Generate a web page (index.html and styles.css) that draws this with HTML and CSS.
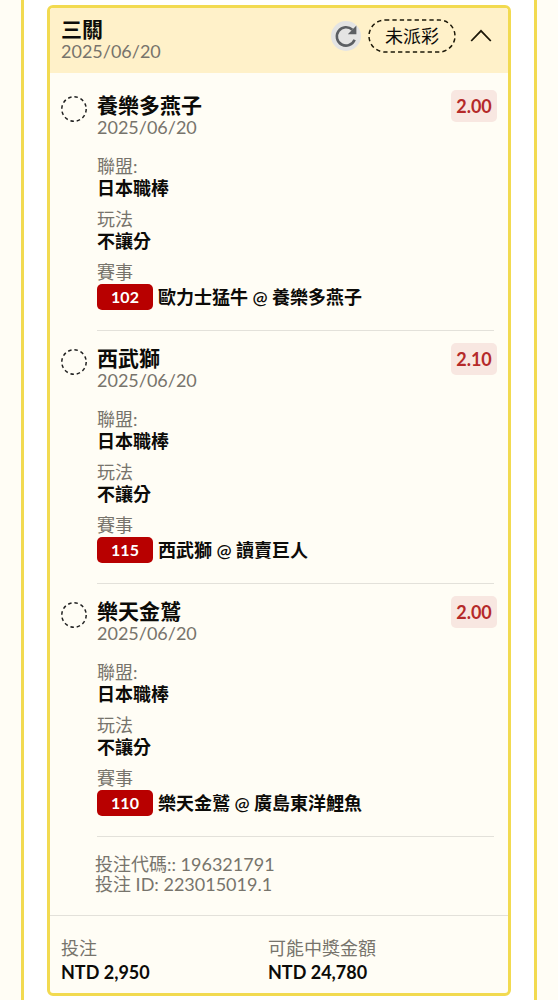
FILE: index.html
```html
<!DOCTYPE html>
<html lang="zh-Hant">
<head>
   <meta charset="utf-8">
   <meta name="viewport" content="width=device-width, initial-scale=1">
   <title>投注記錄</title>
   <link rel="stylesheet" href="styles.css">
</head>
<body>
   <main class="panel">
      <section class="card">
         <header class="card-head">
            <div class="heading">
               <h1>三關</h1>
               <p class="date">2025/06/20</p>
            </div>
            <div class="tools">
               <button type="button" class="refresh" aria-label="重新整理">
                  <svg width="30" height="30" viewBox="0 0 30 30">
                     <path d="M23.6 18.8A9.2 9.2 0 1 1 21.4 8.8" fill="none" stroke="#5c5f63" stroke-width="2.6"/>
                     <path d="M25.4 4.6V13.2H16.8Z" fill="#5c5f63"/>
                  </svg>
               </button>
               <span class="status">
                  <svg width="88" height="34" viewBox="0 0 88 34" aria-hidden="true">
                     <rect x="1" y="1" width="86" height="32" rx="16" fill="none" stroke="#1c1808" stroke-width="1.5" stroke-dasharray="4.3 3.1"/>
                  </svg>
                  未派彩
               </span>
               <button type="button" class="toggle" aria-label="收合">
                  <svg width="22" height="14" viewBox="0 0 22 14">
                     <path d="M1.2 12L11 1.8L20.8 12" fill="none" stroke="#1c1808" stroke-width="1.8"/>
                  </svg>
               </button>
            </div>
         </header>

         <div class="legs">
            <article class="leg">
               <svg class="ring" width="26" height="26" viewBox="0 0 26 26" aria-hidden="true">
                  <circle cx="13" cy="13" r="12.2"/>
               </svg>
               <div class="heading">
                  <h2>養樂多燕子</h2>
                  <p class="date">2025/06/20</p>
               </div>
               <span class="odds">2.00</span>
               <dl class="info">
                  <dt>聯盟:</dt>
                  <dd>日本職棒</dd>
                  <dt>玩法</dt>
                  <dd>不讓分</dd>
                  <dt>賽事</dt>
                  <dd class="match"><span class="num">102</span>歐力士猛牛 @ 養樂多燕子</dd>
               </dl>
            </article>

            <article class="leg">
               <svg class="ring" width="26" height="26" viewBox="0 0 26 26" aria-hidden="true">
                  <circle cx="13" cy="13" r="12.2"/>
               </svg>
               <div class="heading">
                  <h2>西武獅</h2>
                  <p class="date">2025/06/20</p>
               </div>
               <span class="odds">2.10</span>
               <dl class="info">
                  <dt>聯盟:</dt>
                  <dd>日本職棒</dd>
                  <dt>玩法</dt>
                  <dd>不讓分</dd>
                  <dt>賽事</dt>
                  <dd class="match"><span class="num">115</span>西武獅 @ 讀賣巨人</dd>
               </dl>
            </article>

            <article class="leg">
               <svg class="ring" width="26" height="26" viewBox="0 0 26 26" aria-hidden="true">
                  <circle cx="13" cy="13" r="12.2"/>
               </svg>
               <div class="heading">
                  <h2>樂天金鷲</h2>
                  <p class="date">2025/06/20</p>
               </div>
               <span class="odds">2.00</span>
               <dl class="info">
                  <dt>聯盟:</dt>
                  <dd>日本職棒</dd>
                  <dt>玩法</dt>
                  <dd>不讓分</dd>
                  <dt>賽事</dt>
                  <dd class="match"><span class="num">110</span>樂天金鷲 @ 廣島東洋鯉魚</dd>
               </dl>
            </article>
         </div>

         <div class="codes">
            <p>投注代碼:: 196321791</p>
            <p>投注 ID: 223015019.1</p>
         </div>

         <dl class="totals">
            <div>
               <dt>投注</dt>
               <dd>NTD 2,950</dd>
            </div>
            <div>
               <dt>可能中獎金額</dt>
               <dd>NTD 24,780</dd>
            </div>
         </dl>
      </section>
   </main>
</body>
</html>
```
FILE: styles.css
```css
* {
   box-sizing:border-box;
}
body {
   margin:0;
   font-family:Lato,"Noto Sans CJK TC",sans-serif;
   font-size:18px;
   line-height:22px;
   color:#0c0b08;
   background-color:#fffdf5;
}
h1, h2, p, dl, dd {
   margin:0;
}
button {
   padding:0;
   border:0;
   background:none;
   cursor:pointer;
}
svg {
   display:block;
}
.panel {
   min-height:100vh;
   margin:0 21px;
   padding:5px 23px 4px;
   background-color:#fff;
   border:solid #f2da50;
   border-width:0 3px;
}
.card {
   overflow:hidden;
   background-color:#fffdf5;
   border:3px solid #f2da50;
   border-radius:6px;
}

/* header */
.card-head {
   display:flex;
   justify-content:space-between;
   align-items:flex-start;
   padding:10px 16px 11px 11px;
   background-color:#fff1c9;
}
h1, h2 {
   font-size:21px;
   line-height:22px;
   font-weight:600;
}
.date {
   color:#77746c;
}
.tools {
   display:flex;
   align-items:center;
   padding-top:1px;
}
.refresh {
   width:30px;
   height:30px;
   border-radius:50%;
   background-color:#e4e4e3;
}
.status {
   position:relative;
   width:88px;
   margin:0 14px 0 7px;
   line-height:34px;
   text-align:center;
}
.status svg {
   position:absolute;
   top:0;
   left:0;
}

/* legs */
.legs {
   padding-top:5px;
}
.leg {
   display:grid;
   grid-template-columns:26px 1fr auto;
   column-gap:10px;
   align-items:start;
   padding:16px 11px 0;
}
.ring {
   margin-top:2px;
}
.ring circle {
   fill:none;
   stroke:#222;
   stroke-width:1.5;
   stroke-dasharray:3.5 2.89;
}
.odds {
   width:46px;
   margin-top:-4px;
   line-height:32px;
   font-weight:700;
   text-align:center;
   color:#b52a2a;
   background-color:#f8e7e1;
   border-radius:5px;
}
.info {
   grid-column:2 / 4;
   margin:17px 3px 0 0;
   padding-bottom:20px;
   border-bottom:1px solid #e3e1da;
}
.info dt, .totals dt {
   color:#77746c;
}
.info dd {
   margin-bottom:9px;
   font-weight:600;
}
.info .match {
   display:flex;
   align-items:center;
   margin:1px 0 0;
}
.num {
   width:56px;
   margin-right:5px;
   font-size:16px;
   line-height:26px;
   font-weight:700;
   text-align:center;
   color:#fff;
   background-color:#b80000;
   border-radius:5px;
}

/* footer */
.codes {
   padding:17px 11px 21px 45px;
   line-height:20px;
   color:#77746c;
}
.totals {
   display:grid;
   grid-template-columns:207px 1fr;
   padding:20px 11px 9px;
   line-height:24px;
   border-top:1px solid #e3e1da;
}
.totals dd {
   font-weight:700;
}
```
